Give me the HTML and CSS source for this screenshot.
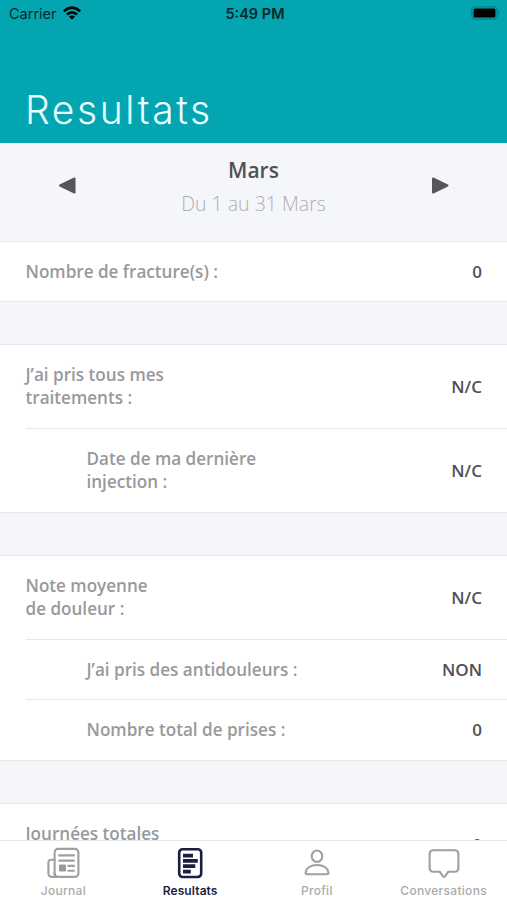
FILE: index.html
```html
<!DOCTYPE html>
<html lang="fr">
<head>
  <meta charset="UTF-8" />
  <meta name="viewport" content="width=device-width, initial-scale=1.0"/>
  <title>Resultats</title>
  <link rel="stylesheet" href="styles.css">
</head>
<body>
  <div class="app">

    <header>
      <div class="status-bar">
        <div class="carrier">
          <span>Carrier</span>
          <svg class="wifi" viewBox="0 0 18 14">
            <path d="M0 4.4 Q9 -3.8 18 4.4 L16.2 6.3 Q9 -0.2 1.8 6.3 Z" />
            <path d="M3 7.5 Q9 2.4 15 7.5 L13.2 9.4 Q9 6 4.8 9.4 Z" />
            <path d="M6 10.6 Q9 8.2 12 10.6 L9 13.7 Z" />
          </svg>
        </div>
        <span class="time">5:49 PM</span>
        <svg class="battery" viewBox="0 0 30 14">
          <rect x="0.8" y="0.8" width="25.4" height="12.4" rx="3.6" />
          <path class="level" d="M4 2.5H23Q24.4 2.5 24.4 4V10Q24.4 11.5 23 11.5H4Q2.6 11.5 2.6 10V4Q2.6 2.5 4 2.5Z" />
          <path class="tip" d="M27.3 4.8Q29.6 7 27.3 9.2Z" />
        </svg>
      </div>
      <h1>Resultats</h1>
    </header>

    <main>
      <div class="month">
        <svg class="arrow" viewBox="0 0 18 18">
          <path d="M2 8.5L16.5 1.5V15.5Z" />
        </svg>
        <div class="month-text">
          <h2>Mars</h2>
          <p>Du 1 au 31 Mars</p>
        </div>
        <svg class="arrow" viewBox="0 0 18 18">
          <path d="M16.5 8.5L2 1.5V15.5Z" />
        </svg>
      </div>

      <section>
        <div class="row">
          <span class="label">Nombre de fracture(s) :</span>
          <span class="value">0</span>
        </div>
      </section>

      <section>
        <div class="row double">
          <span class="label">J’ai pris tous mes<br>traitements :</span>
          <span class="value">N/C</span>
        </div>
        <div class="row double sub">
          <span class="label">Date de ma dernière<br>injection :</span>
          <span class="value">N/C</span>
        </div>
      </section>

      <section>
        <div class="row double">
          <span class="label">Note moyenne<br>de douleur :</span>
          <span class="value">N/C</span>
        </div>
        <div class="row sub">
          <span class="label">J’ai pris des antidouleurs :</span>
          <span class="value">NON</span>
        </div>
        <div class="row sub">
          <span class="label">Nombre total de prises :</span>
          <span class="value">0</span>
        </div>
      </section>

      <section>
        <div class="row double">
          <span class="label">Journées totales<br>&nbsp;</span>
          <span class="value">0</span>
        </div>
      </section>
    </main>

    <nav class="tabs">
      <a class="tab">
        <svg viewBox="0 0 34 32">
          <rect x="8.6" y="1.9" width="23.8" height="28" rx="3.4" />
          <path d="M8.6 12.7H5.4Q2.4 12.7 2.4 15.7V26.2Q2.4 29.9 6.2 29.9H11Q8.6 29.4 8.6 26.2" />
          <path d="M13.2 8.4H28M13.2 13.6H28M22.3 18.9H28M22.3 23.7H28" />
          <rect class="fill" x="13" y="17.5" width="7" height="7" rx="1.2" />
        </svg>
        <span>Journal</span>
      </a>
      <a class="tab active">
        <svg viewBox="0 0 34 32">
          <rect x="6.2" y="2.2" width="22" height="27.8" rx="3.4" />
          <path class="bars" d="M10 8.6H20M10 13.9H24.8M10 19.2H22.3M10 24.6H17.8" />
        </svg>
        <span>Resultats</span>
      </a>
      <a class="tab">
        <svg viewBox="0 0 34 32">
          <ellipse cx="17" cy="9.2" rx="5.3" ry="5.7" />
          <path d="M5.6 25.6C6.4 20.8 11 18 17 18S27.6 20.8 28.4 25.6Q28.6 27.3 27 27.3H7Q5.4 27.3 5.6 25.6Z" />
        </svg>
        <span>Profil</span>
      </a>
      <a class="tab">
        <svg viewBox="0 0 34 32">
          <path d="M6.6 3.2H27.4Q31.4 3.2 31.4 7.2V20.8Q31.4 24.8 27.4 24.8H21.2L18 29.4Q17 30.5 16 29.4L12.8 24.8H6.6Q2.6 24.8 2.6 20.8V7.2Q2.6 3.2 6.6 3.2Z" />
        </svg>
        <span>Conversations</span>
      </a>
    </nav>

  </div>
</body>
</html>
```
FILE: styles.css
```css
:root {
  --teal: #03a6b0;
  --light: #f5f6fa;
  --line: #e8e9eb;
  --navy: #1b1d42;
}

* {
  box-sizing: border-box;
}

body {
  margin: 0;
  font-family: 'Open Sans', 'Noto Sans', sans-serif;
  background: var(--light);
}

.app {
  display: flex;
  flex-direction: column;
  height: 900px;
  overflow: hidden;
}

header {
  height: 143px;
  flex-shrink: 0;
  background: var(--teal);
}

.status-bar {
  display: grid;
  grid-template-columns: 1fr auto 1fr;
  align-items: center;
  height: 27px;
  padding: 0 6px 0 9px;
  font-family: Inter, sans-serif;
  font-size: 14.5px;
  color: #06262b;
}

.carrier {
  display: flex;
  align-items: center;
  gap: 6px;
}

.wifi {
  width: 18px;
  height: 14px;
  margin-top: -2px;
  fill: #000;
}

.time {
  font-weight: 600;
}

.battery {
  width: 30px;
  height: 14px;
  margin-top: -1px;
  justify-self: end;
  fill: none;
  stroke: #087f87;
  stroke-width: 1.3;
}

.battery .level {
  fill: #000;
  stroke: none;
}

.battery .tip {
  fill: #087f87;
  stroke: none;
}

h1 {
  margin: 57px 0 0 25px;
  font-family: Inter, sans-serif;
  font-size: 39px;
  font-weight: 300;
  line-height: 52px;
  letter-spacing: 2.6px;
  color: #e8ffff;
}

main {
  flex: 1;
  min-height: 0;
  overflow: hidden;
}

.month {
  display: flex;
  justify-content: space-between;
  height: 98px;
  padding: 11px 58px 0;
}

.arrow {
  width: 18px;
  height: 18px;
  margin-top: 23px;
  fill: #55565b;
  stroke: #55565b;
  stroke-width: 2;
  stroke-linejoin: round;
}

.month-text {
  text-align: center;
}

h2 {
  margin: 0;
  font-size: 21px;
  font-weight: 550;
  line-height: 32px;
  color: #505156;
}

.month-text p {
  margin: 1px 0 0;
  font-size: 19.5px;
  font-weight: 300;
  line-height: 33px;
  color: #aeafb3;
}

section {
  margin-bottom: 42px;
  padding-left: 25.5px;
  background: #fff;
  border-top: 1px solid var(--line);
  border-bottom: 1px solid var(--line);
}

.row {
  display: flex;
  align-items: center;
  justify-content: space-between;
  height: 59px;
  padding-right: 25px;
}

.row + .row {
  height: 60.5px;
  border-top: 1px solid var(--line);
}

.double {
  height: 82.5px;
}

.row + .double {
  height: 84.5px;
}

.sub {
  padding-left: 61px;
}

.label {
  font-size: 17.1px;
  font-weight: 600;
  line-height: 23px;
  color: #98999c;
}

.value {
  font-size: 17px;
  font-weight: 550;
  color: #505156;
}

.tabs {
  display: flex;
  height: 60px;
  flex-shrink: 0;
  background: #fff;
  border-top: 1px solid #e4e5e7;
}

.tab {
  display: flex;
  flex: 1;
  flex-direction: column;
  align-items: center;
  padding-top: 6px;
  font-family: Inter, sans-serif;
  font-size: 12px;
  font-weight: 500;
  letter-spacing: 0.3px;
  color: #aaa;
}

.tab svg {
  width: 34px;
  height: 32px;
  fill: none;
  stroke: #a0a0a0;
  stroke-width: 2.1;
  stroke-linecap: round;
}

.tab .fill {
  fill: #999;
  stroke: none;
}

.tab span {
  margin-top: 4px;
  line-height: 16px;
}

.tab.active {
  font-weight: 600;
  letter-spacing: 0.1px;
  color: var(--navy);
}

.tab.active svg {
  stroke: var(--navy);
  stroke-width: 2.6;
}

.tab .bars {
  stroke-width: 3.8;
  stroke-linecap: butt;
}
```
